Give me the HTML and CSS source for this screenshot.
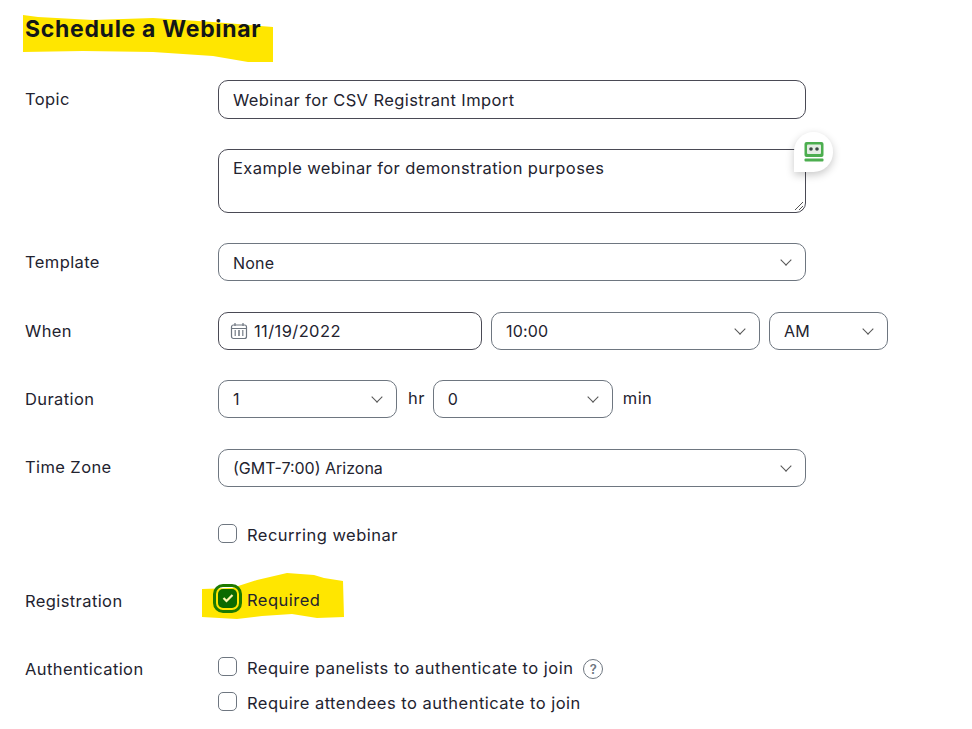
FILE: index.html
```html
<!DOCTYPE html>
<html lang="en">
<head>
    <meta charset="UTF-8">
    <title>Schedule a Webinar</title>
    <link rel="stylesheet" href="styles.css">
</head>
<body>
    <div class="page">
        <svg class="marker marker-title" viewBox="0 0 250 48"><path d="M0 0 L15 2 L70 5 L130 3 L190 7 L250 12 L250 47 L225 47 L190 41 L130 37 L60 36 L0 37 Z"/></svg>
        <svg class="marker marker-required" viewBox="0 0 142 46"><path d="M0 16 L30 15 L55 7 L85 0 L112 2 L122 5 L141 8 L142 44 L115 45 L90 41 L60 43 L35 46 L0 44 Z"/></svg>

        <h1>Schedule a Webinar</h1>

        <div class="row row-topic">
            <label>Topic</label>
            <div class="controls">
                <div class="field wide">Webinar for CSV Registrant Import</div>
            </div>
        </div>

        <div class="row row-desc">
            <label></label>
            <div class="controls">
                <div class="field wide textarea">
                    Example webinar for demonstration purposes
                    <svg class="grip" width="10" height="10" viewBox="0 0 10 10"><path d="M1 9 L9 1 M5 9 L9 5 M8 9 L9 8"/></svg>
                    <div class="robo">
                        <svg width="22" height="20" viewBox="0 0 22 20">
                            <rect x="1.500" y="0" width="19" height="15" rx="2" fill="#4cae4f"/>
                            <rect x="4" y="2.500" width="14" height="9.500" rx="1" fill="#e4ede3"/>
                            <circle cx="8" cy="7" r="1.800" fill="#3c4a45"/>
                            <circle cx="14" cy="7" r="1.800" fill="#3c4a45"/>
                            <rect x="1.500" y="16.500" width="19" height="3" rx="1" fill="#4cae4f"/>
                        </svg>
                    </div>
                </div>
            </div>
        </div>

        <div class="row row-template">
            <label>Template</label>
            <div class="controls">
                <div class="field wide select">None <span class="chev"></span></div>
            </div>
        </div>

        <div class="row">
            <label>When</label>
            <div class="controls">
                <div class="field date">
                    <svg class="cal" width="18" height="18" viewBox="0 0 18 18">
                        <rect x="1.500" y="3" width="15" height="13.500" rx="2"/>
                        <path d="M1.500 6.500 H16.500 M5 1 V4 M13 1 V4"/>
                        <path class="dots" d="M4.500 9 H6 M8 9 H10 M12 9 H13.500 M4.500 11 H6 M8 11 H10 M12 11 H13.500 M4.500 13 H6 M8 13 H10 M12 13 H13.500"/>
                    </svg>
                    <span>11/19/2022</span>
                </div>
                <div class="field select time">10:00 <span class="chev"></span></div>
                <div class="field select ampm">AM <span class="chev"></span></div>
            </div>
        </div>

        <div class="row row-duration">
            <label>Duration</label>
            <div class="controls">
                <div class="field select hours">1 <span class="chev"></span></div>
                <span class="unit unit-hr">hr</span>
                <div class="field select mins">0 <span class="chev"></span></div>
                <span class="unit">min</span>
            </div>
        </div>

        <div class="row row-zone">
            <label>Time Zone</label>
            <div class="controls">
                <div class="field wide select tz">(GMT-7:00) Arizona <span class="chev"></span></div>
            </div>
        </div>

        <div class="row row-check row-recurring">
            <label></label>
            <div class="controls">
                <span class="box"></span>
                <span class="check-text">Recurring webinar</span>
            </div>
        </div>

        <div class="row row-check row-registration">
            <label>Registration</label>
            <div class="controls">
                <span class="box checked">
                    <svg width="12" height="10" viewBox="0 0 12 10"><path d="M1.500 5 L4.500 8 L10.500 2"/></svg>
                </span>
                <span class="check-text">Required</span>
            </div>
        </div>

        <div class="row row-check row-auth">
            <label>Authentication</label>
            <div class="controls">
                <span class="box"></span>
                <span class="check-text">Require panelists to authenticate to join</span>
                <span class="help">?</span>
            </div>
        </div>

        <div class="row row-check row-auth2">
            <label></label>
            <div class="controls">
                <span class="box"></span>
                <span class="check-text">Require attendees to authenticate to join</span>
            </div>
        </div>
    </div>
</body>
</html>
```

FILE: styles.css
```css
html, body {
    margin: 0;
    height: 729px;
    overflow: hidden;
    background: #fff;
}
body {
    font-family: Inter, "Noto Sans", sans-serif;
    font-size: 16.500px;
    letter-spacing: 0.400px;
    color: #23232f;
}
.page {
    position: relative;
    padding: 15px 0 0 25px;
}
.marker {
    position: absolute;
    fill: #ffe600;
    z-index: 0;
}
.marker-title {
    left: 23px;
    top: 15px;
    width: 250px;
    height: 48px;
}
.marker-required {
    left: 202px;
    top: 573px;
    width: 142px;
    height: 46px;
}
h1 {
    position: relative;
    margin: 0 0 37px;
    font-size: 23px;
    letter-spacing: 0.700px;
    line-height: 28px;
    font-weight: 700;
    color: #131619;
}
.row {
    position: relative;
    display: flex;
    align-items: center;
    min-height: 38px;
    margin-bottom: 30px;
}
.row label {
    width: 193px;
    flex: none;
}
.row-topic {
    height: 39px;
    margin-bottom: 30px;
}
.row-topic label {
    margin-top: -1px;
}
.row-template,
.row-duration {
    margin-bottom: 31px;
}
.row-template .field {
    padding-top: 1px;
}
.row-zone {
    margin-bottom: 35px;
}
.row-zone label {
    margin-top: -2px;
}
.controls {
    display: flex;
    align-items: center;
}
.field {
    position: relative;
    box-sizing: border-box;
    height: 38px;
    display: flex;
    align-items: center;
    padding: 0 14px;
    border: 1px solid #6e7680;
    border-radius: 10px;
    background: #fff;
}
.select {
    font-size: 16px;
    letter-spacing: 0.200px;
}
.select.tz {
    letter-spacing: 0;
}
.wide {
    width: 588px;
}
.row-topic .field {
    height: 39px;
    border-color: #4a4a55;
}
.textarea {
    height: 64px;
    align-items: flex-start;
    padding-top: 8px;
    border-color: #4a4a55;
}
.grip {
    position: absolute;
    right: 1px;
    bottom: 1px;
    fill: none;
    stroke: #555;
    stroke-width: 1;
}
.robo {
    position: absolute;
    right: -28px;
    top: -18px;
    width: 39px;
    height: 40px;
    display: flex;
    align-items: center;
    justify-content: center;
    background: #fff;
    border-radius: 20px 20px 20px 0;
    box-shadow: 0 3px 8px rgba(0, 0, 0, 0.22);
}
.chev {
    position: absolute;
    right: 15px;
    top: 50%;
    width: 7px;
    height: 7px;
    margin-top: -6px;
    border-right: 1.500px solid #555;
    border-bottom: 1.500px solid #555;
    transform: rotate(45deg);
}
.date {
    width: 264px;
    padding-left: 11px;
    border-color: #4a4a55;
}
.cal {
    margin-right: 6px;
    fill: none;
    stroke: #6e7680;
    stroke-width: 1.200;
}
.cal .dots {
    stroke-width: 1.500;
}
.time {
    width: 269px;
    margin-left: 9px;
}
.ampm {
    width: 119px;
    margin-left: 9px;
}
.hours {
    width: 179px;
}
.mins {
    width: 180px;
}
.unit {
    margin: -2px 10px 0 10px;
}
.unit-hr {
    margin: -2px 8px 0 11px;
}
.row-check {
    min-height: 20px;
    letter-spacing: 0.480px;
}
.row-check label {
    margin-top: 6px;
    letter-spacing: 0.400px;
}
.box {
    box-sizing: border-box;
    width: 19px;
    height: 19px;
    margin-right: 10px;
    flex: none;
    border: 1px solid #6e7680;
    border-radius: 5px;
    background: #fff;
}
.check-text {
    position: relative;
    margin-top: 3px;
}
.box.checked {
    display: flex;
    align-items: center;
    justify-content: center;
    background: #0b6a00;
    border: none;
    outline: 3px solid #1d7a00;
    outline-offset: 2px;
    position: relative;
}
.box.checked svg {
    fill: none;
    stroke: #fdf7b0;
    stroke-width: 2.200;
}
.help {
    box-sizing: border-box;
    width: 20px;
    height: 20px;
    margin: 5px 0 0 10px;
    display: flex;
    align-items: center;
    justify-content: center;
    border: 1.500px solid #6e7680;
    border-radius: 50%;
    font-size: 13px;
    font-weight: 600;
    letter-spacing: 0;
    color: #6e7680;
}
.row-recurring {
    margin-bottom: 40px;
}
.row-registration {
    margin-bottom: 42px;
}
.row-auth {
    margin-bottom: 11px;
}
```
